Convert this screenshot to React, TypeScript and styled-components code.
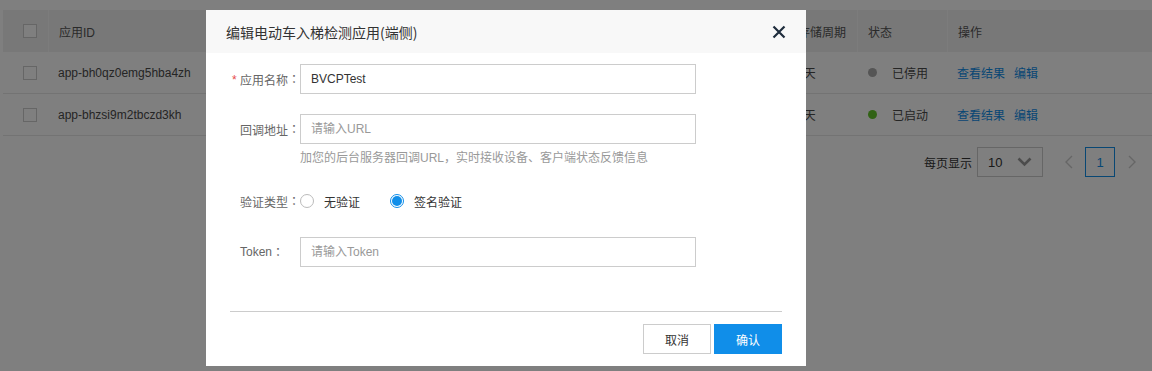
import React from "react";
import styled, { createGlobalStyle } from "styled-components";

const GlobalStyle = createGlobalStyle`
  html, body {
    margin: 0;
    padding: 0;
    background: #ffffff;
    font-family: "Liberation Sans", "Noto Sans CJK SC", sans-serif;
    font-size: 12px;
    color: #333333;
  }
  * {
    box-sizing: border-box;
  }
`;

const Page = styled.div`
  width: 1152px;
  height: 371px;
  padding: 10px 0 0 3px;
  overflow: hidden;
  position: relative;
`;

const COLS = "45px 200px 250px 289px 70px 90px 220px";

const Table = styled.div`
  width: 1164px;
`;

const HeaderRow = styled.div`
  display: grid;
  grid-template-columns: ${COLS};
  height: 42px;
  background: #f0f0f0;
`;

const HeaderCell = styled.div<{ $first?: boolean }>`
  display: flex;
  align-items: center;
  padding-left: ${(p) => (p.$first ? "20px" : "10px")};
  border-left: ${(p) => (p.$first ? "none" : "1px solid #f8f8f8")};
  color: #555555;
`;

const BodyRow = styled.div`
  display: grid;
  grid-template-columns: ${COLS};
  height: 42px;
  border-bottom: 1px solid #e6e6e6;
`;

const Cell = styled.div<{ $first?: boolean }>`
  display: flex;
  align-items: center;
  padding-left: ${(p) => (p.$first ? "20px" : "10px")};
  color: #4a4a4a;
  white-space: nowrap;
  overflow: hidden;
`;

const Check = styled.span`
  display: inline-block;
  width: 14px;
  height: 14px;
  border: 1px solid #cccccc;
  background: #ffffff;
`;

const StatusDot = styled.span<{ $color: string }>`
  display: inline-block;
  width: 9px;
  height: 9px;
  border-radius: 50%;
  background: ${(p) => p.$color};
  margin: 0 15px 0 1px;
`;

const Link = styled.a`
  color: #108ee9;
  text-decoration: none;
  margin-right: 9px;
`;

const Pager = styled.div`
  display: flex;
  align-items: center;
  justify-content: flex-end;
  padding: 11px 16px 0 0;
  width: 1149px;
`;

const PagerLabel = styled.span`
  color: #333333;
  margin-right: 5px;
`;

const PageSize = styled.div`
  width: 66px;
  height: 30px;
  border: 1px solid #cccccc;
  display: flex;
  align-items: center;
  justify-content: space-between;
  padding: 0 10px 0 10px;
  color: #333333;
  font-size: 13px;
`;

const PageArrow = styled.span<{ $left?: boolean }>`
  width: 8px;
  display: flex;
  justify-content: center;
  margin: ${(p) => (p.$left ? "0 12px 0 22px" : "0 0 0 13px")};
`;

const PageNum = styled.div`
  width: 30px;
  height: 30px;
  border: 1px solid #108ee9;
  display: flex;
  align-items: center;
  justify-content: center;
  color: #108ee9;
  font-size: 13px;
`;

const Mask = styled.div`
  position: absolute;
  inset: 0;
  background: rgba(0, 0, 0, 0.5);
`;

const Modal = styled.div`
  position: absolute;
  left: 206px;
  top: 10px;
  width: 600px;
  height: 356px;
  background: #ffffff;
  display: flex;
  flex-direction: column;
`;

const ModalHeader = styled.div`
  height: 43px;
  background: #f8f8f8;
  display: flex;
  align-items: center;
  justify-content: space-between;
  padding: 0 20px 0 20px;
`;

const ModalTitle = styled.div`
  color: #333333;
  font-family: "Noto Sans CJK SC", "Liberation Sans", sans-serif;
  font-size: 14px;
`;

const CloseBtn = styled.span`
  display: flex;
  width: 14px;
  height: 14px;
`;

const ModalBody = styled.div`
  flex: 1;
  padding: 11px 24px 0 34px;
`;

const FormItem = styled.div<{ $mb: number }>`
  display: flex;
  align-items: flex-start;
  margin-bottom: ${(p) => p.$mb}px;
`;

const Label = styled.label<{ $h?: number }>`
  width: 60px;
  flex: none;
  height: ${(p) => p.$h ?? 30}px;
  display: flex;
  align-items: center;
  color: #666666;
  position: relative;
  white-space: nowrap;
`;

const Colon = styled.span`
  font-family: "Noto Sans CJK TC", "Noto Sans CJK SC", sans-serif;
  line-height: 1;
`;

const Req = styled.span`
  position: absolute;
  left: -8px;
  top: 9px;
  color: #e64b4b;
`;

const Field = styled.div`
  display: flex;
  flex-direction: column;
`;

const Input = styled.input`
  width: 396px;
  height: 30px;
  border: 1px solid #cccccc;
  padding: 0 10px;
  font-family: "Liberation Sans", "Noto Sans CJK SC", sans-serif;
  font-size: 12px;
  color: #333333;
  outline: none;
  &::placeholder {
    color: #999999;
  }
`;

const Help = styled.div`
  margin-top: 6px;
  line-height: 16px;
  color: #999999;
`;

const RadioGroup = styled.div`
  display: flex;
  align-items: center;
  height: 20px;
`;

const RadioOption = styled.span`
  display: flex;
  align-items: center;
  color: #333333;
  margin-right: 30px;
`;

const RadioCircle = styled.span<{ $checked?: boolean }>`
  width: 14px;
  height: 14px;
  border-radius: 50%;
  border: 1px solid ${(p) => (p.$checked ? "#108ee9" : "#bbbbbb")};
  margin-right: 10px;
  display: flex;
  align-items: center;
  justify-content: center;
  &::after {
    content: "";
    width: 10px;
    height: 10px;
    border-radius: 50%;
    background: ${(p) => (p.$checked ? "#108ee9" : "transparent")};
  }
`;

const Footer = styled.div`
  margin: 0 24px;
  border-top: 1px solid #cccccc;
  padding: 12px 0 12px;
  display: flex;
  justify-content: flex-end;
  gap: 3px;
`;

const Button = styled.button<{ $primary?: boolean }>`
  width: 68px;
  height: 30px;
  border: 1px solid ${(p) => (p.$primary ? "#108ee9" : "#cccccc")};
  background: ${(p) => (p.$primary ? "#108ee9" : "#ffffff")};
  color: ${(p) => (p.$primary ? "#ffffff" : "#333333")};
  font-family: "Noto Sans CJK SC", "Liberation Sans", sans-serif;
  font-size: 12px;
  padding: 0;
  cursor: pointer;
`;

// columns between the ID and the retention period sit under the modal
const rows = [
  { id: "app-bh0qz0emg5hba4zh", status: "已停用", dot: "#aaaaaa" },
  { id: "app-bhzsi9m2tbczd3kh", status: "已启动", dot: "#63c52b" },
];

const Chevron = ({ dir }: { dir: "left" | "right" | "down" }) => {
  if (dir === "down") {
    return (
      <svg width="15" height="10" viewBox="0 0 15 10">
        <path d="M1.5 1.5 L7.5 7.5 L13.5 1.5" fill="none" stroke="#999" strokeWidth="2.6" />
      </svg>
    );
  }
  return (
    <svg width="8" height="14" viewBox="0 0 8 14">
      <path
        d={dir === "left" ? "M7 1 L1 7 L7 13" : "M1 1 L7 7 L1 13"}
        fill="none"
        stroke="#cccccc"
        strokeWidth="1.4"
      />
    </svg>
  );
};

const App: React.FC = () => {
  return (
    <>
      <GlobalStyle />
      <Page>
        <Table>
          <HeaderRow>
            <HeaderCell $first>
              <Check />
            </HeaderCell>
            <HeaderCell>应用ID</HeaderCell>
            <HeaderCell />
            <HeaderCell />
            <HeaderCell>存储周期</HeaderCell>
            <HeaderCell>状态</HeaderCell>
            <HeaderCell>操作</HeaderCell>
          </HeaderRow>
          {rows.map((r) => (
            <BodyRow key={r.id}>
              <Cell $first>
                <Check />
              </Cell>
              <Cell>{r.id}</Cell>
              <Cell />
              <Cell />
              <Cell>7天</Cell>
              <Cell>
                <StatusDot $color={r.dot} />
                {r.status}
              </Cell>
              <Cell>
                <Link>查看结果</Link>
                <Link>编辑</Link>
              </Cell>
            </BodyRow>
          ))}
        </Table>
        <Pager>
          <PagerLabel>每页显示</PagerLabel>
          <PageSize>
            10
            <Chevron dir="down" />
          </PageSize>
          <PageArrow $left>
            <Chevron dir="left" />
          </PageArrow>
          <PageNum>1</PageNum>
          <PageArrow>
            <Chevron dir="right" />
          </PageArrow>
        </Pager>

        <Mask />
        <Modal>
          <ModalHeader>
            <ModalTitle>编辑电动车入梯检测应用(端侧)</ModalTitle>
            <CloseBtn>
              <svg width="14" height="14" viewBox="0 0 14 14">
                <path d="M1.5 1.5 L12.5 12.5 M12.5 1.5 L1.5 12.5" stroke="#1f2d3d" strokeWidth="2.2" />
              </svg>
            </CloseBtn>
          </ModalHeader>
          <ModalBody>
            <FormItem $mb={20}>
              <Label>
                <Req>*</Req>
                应用名称<Colon>：</Colon>
              </Label>
              <Input defaultValue="BVCPTest" />
            </FormItem>
            <FormItem $mb={25}>
              <Label>
                回调地址<Colon>：</Colon>
              </Label>
              <Field>
                <Input placeholder="请输入URL" />
                <Help>加您的后台服务器回调URL，实时接收设备、客户端状态反馈信息</Help>
              </Field>
            </FormItem>
            <FormItem $mb={26}>
              <Label $h={20}>
                验证类型<Colon>：</Colon>
              </Label>
              <RadioGroup>
                <RadioOption>
                  <RadioCircle />
                  无验证
                </RadioOption>
                <RadioOption>
                  <RadioCircle $checked />
                  签名验证
                </RadioOption>
              </RadioGroup>
            </FormItem>
            <FormItem $mb={0}>
              <Label>
                Token<Colon>：</Colon>
              </Label>
              <Input placeholder="请输入Token" />
            </FormItem>
          </ModalBody>
          <Footer>
            <Button>取消</Button>
            <Button $primary>确认</Button>
          </Footer>
        </Modal>
      </Page>
    </>
  );
};

export default App;
